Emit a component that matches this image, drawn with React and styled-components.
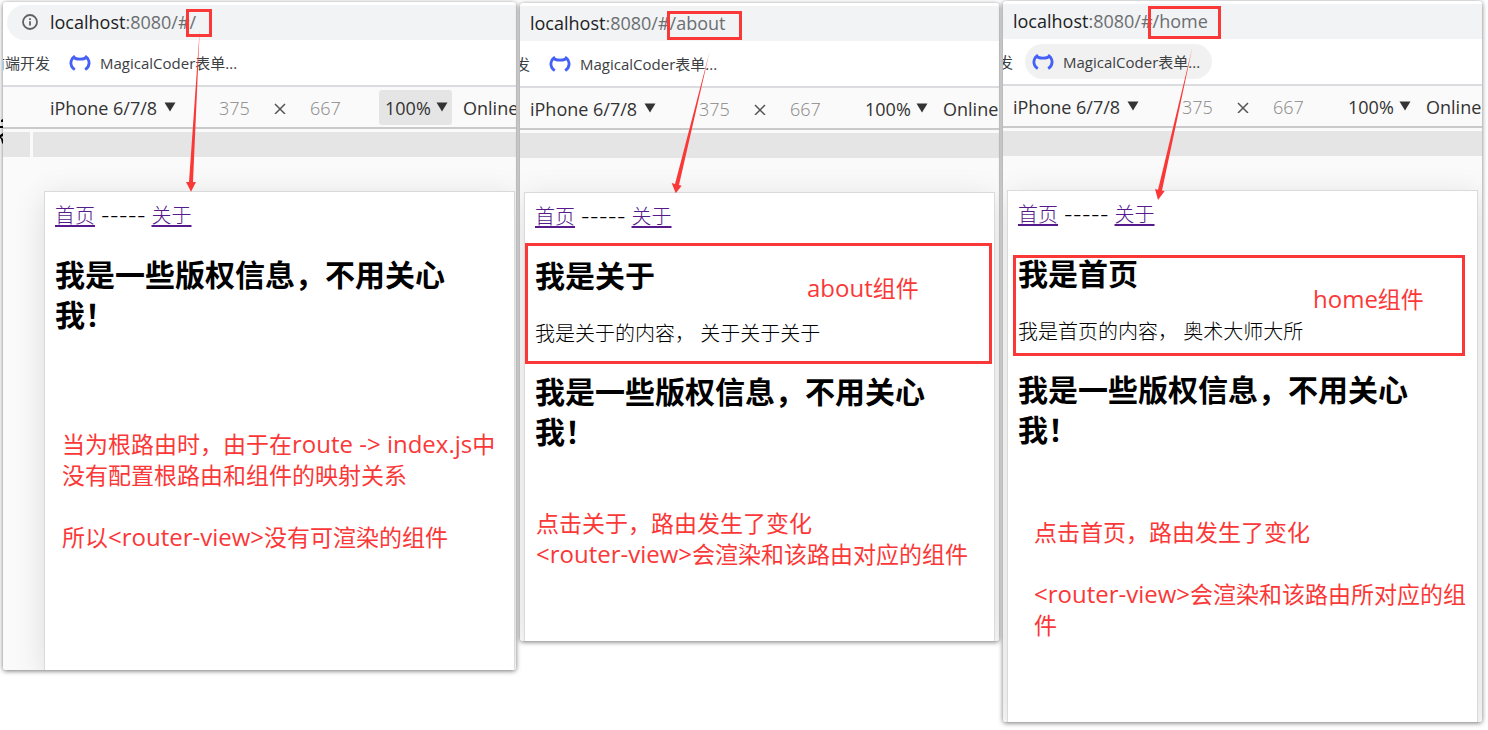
import React from "react";
import styled, { createGlobalStyle } from "styled-components";

const RED = "#fb3838";
const LATIN = '"Open Sans", "Noto Sans CJK SC", sans-serif';

const GlobalStyle = createGlobalStyle`
  * { box-sizing: border-box; }
  body {
    margin: 0;
    background: #fff;
    font-family: ${LATIN};
    overflow-x: hidden;
  }
`;

const Board = styled.main`
  position: relative;
  display: grid;
  grid-template-columns: 513fr 479fr 479fr;
  gap: 4px;
  align-items: start;
  padding: 0 6px 8px 3px;
`;

const EdgeMarks = styled.svg`
  position: absolute;
  left: 0;
  top: 118px;
`;

const Panel = styled.section`
  position: relative;
  min-width: 0;
  margin-top: ${(p) => p.$top}px;
`;

const Clip = styled.div`
  display: flex;
  min-height: ${(p) => p.$height}px;
  overflow: hidden;
  border-radius: 3px;
  background: #fff;
  box-shadow: 0 1px 5px rgba(0, 0, 0, 0.55);
`;

/* The browser content, scrolled sideways when its left part is cut off. */
const Browser = styled.div`
  flex: 1;
  min-width: 0;
  display: flex;
  flex-direction: column;
  margin-left: ${(p) => (p.$scrolled ? -37 : 0)}px;
  padding-top: 3px;
`;

const AddressBar = styled.header`
  display: flex;
  align-items: center;
  gap: 12px;
  height: 35px;
  margin-left: 4px;
  padding: 0 0 1px 15px;
  border-radius: 18px 0 0 18px;
  background: #f1f3f4;
  font-size: 18px;
  line-height: 24px;
  white-space: nowrap;
  color: #6b6e72;
`;

const Host = styled.span`
  color: #202124;
`;

const Bookmarks = styled.nav`
  display: flex;
  align-items: center;
  gap: 12px;
  height: 45px;
  font-size: 15px;
  line-height: 20px;
  white-space: nowrap;
`;

const Folder = styled.a`
  display: flex;
  justify-content: flex-end;
  width: 47px;
  overflow: hidden;
  color: #3c4043;
  text-decoration: none;
`;

const Bookmark = styled.a`
  display: flex;
  align-items: center;
  gap: 9px;
  height: 35px;
  padding: 0 12px 0 7px;
  border-radius: 18px;
  background: ${(p) => (p.$hovered ? "#f1f1f1" : "transparent")};
  color: #3c4043;
  text-decoration: none;
`;

const DeviceBar = styled.div`
  display: flex;
  align-items: center;
  height: 44px;
  padding-left: 41px;
  border-top: 2px solid #dadce0;
  border-bottom: 2px solid #cacaca;
  background: #fafafa;
  font-size: 18px;
  color: #333;
  overflow: hidden;
`;

const Picker = styled.label`
  position: relative;
  flex: none;
  display: flex;
  align-items: center;
  width: ${(p) => p.$width}px;
  height: 35px;
  border-radius: 3px;
  background: ${(p) => (p.$active ? "#e5e5e5" : "transparent")};

  & + & {
    margin-left: 5px;
  }

  select {
    width: 100%;
    height: 35px;
    padding: 2px 0 0 6px;
    border: 0;
    outline: 0;
    appearance: none;
    background: transparent;
    font: inherit;
    color: inherit;
  }

  svg {
    position: absolute;
    right: 4px;
    top: 12px;
    pointer-events: none;
  }
`;

const SizeFields = styled.div`
  flex: none;
  display: flex;
  align-items: center;
  gap: 24px;
  margin: 0 38px 0 39px;
`;

const SizeField = styled.input`
  width: 31px;
  padding: 2px 0 0;
  border: 0;
  outline: 0;
  background: transparent;
  font: inherit;
  font-weight: 300;
  color: #888;
`;

const Ruler = styled.div`
  display: flex;
  gap: 3px;
  height: 28px;
  padding-top: 3px;
  background: #fafafa;

  &::before {
    content: "";
    width: 27px;
    background: #e5e5e5;
  }

  &::after {
    content: "";
    flex: 1;
    background: #e5e5e5;
  }
`;

const Stage = styled.div`
  flex: 1;
  display: flex;
  padding: 34px ${(p) => p.$gutter}px 0 41px;
  background: #fafafa;
  overflow: hidden;
`;

const Screen = styled.article`
  flex: 1;
  min-width: 0;
  padding: 10px 0 0 10px;
  border: 1px solid #dadada;
  border-bottom: 0;
  background: #fff;
  box-shadow: 0 6px 30px rgba(0, 0, 0, 0.12);
  color: #000;
`;

const RouteLinks = styled.nav`
  font-family: Inter, "Noto Sans CJK SC", sans-serif;
  font-size: 20px;
  font-weight: 300;
  line-height: 28px;

  a {
    color: #551a8b;
    text-decoration-thickness: 2px;
    text-underline-offset: 2px;
  }
`;

const Title = styled.h2`
  max-width: 420px;
  margin: 25px 0 24px;
  font-size: 30px;
  line-height: 40px;
  font-weight: 700;
`;

const Body = styled.p`
  margin: 24px 0;
  font-size: 20px;
  line-height: 27px;
  font-weight: 300;
`;

const Note = styled.div`
  margin: ${(p) => p.$gap}px 0 0 ${(p) => p.$indent}px;
  font-size: 23px;
  line-height: 31px;
  color: ${RED};
  white-space: nowrap;
`;

const NoteLine = styled.p`
  height: 31px;
  margin: ${(p) => (p.$spaced ? 31 : 0)}px 0 0;
`;

const Code = styled.span`
  font-size: 24px;
  line-height: 24px;
`;

const Outline = styled.div`
  position: absolute;
  left: ${(p) => p.$x}px;
  top: ${(p) => p.$y}px;
  width: ${(p) => p.$w}px;
  height: ${(p) => p.$h}px;
  border: 3px solid ${RED};
  pointer-events: none;
`;

const Caption = styled.span`
  position: absolute;
  left: ${(p) => p.$x}px;
  top: ${(p) => p.$y}px;
  font-size: 23px;
  line-height: 31px;
  color: ${RED};
  white-space: nowrap;
`;

const ArrowLayer = styled.svg`
  position: absolute;
  left: 0;
  top: 0;
  pointer-events: none;
`;

function InfoIcon() {
  return (
    <svg width="16" height="16" viewBox="0 0 16 16" fill="none" stroke="#5f6368" strokeWidth="1.8" aria-hidden="true">
      <circle cx="8" cy="8" r="7" />
      <path d="M8 7.2v4.3M8 4.2v1.8" />
    </svg>
  );
}

function CatIcon() {
  return (
    <svg width="22" height="16" viewBox="0 0 22 16" fill="none" stroke="#4460f5" strokeWidth="2.8" aria-hidden="true">
      <path d="M5.8 14.6C2.8 12.6 1.4 9.2 2.2 6 2.7 4 3.4 2.8 4.8 2 6.2 4.8 15.8 4.8 17.2 2 18.6 2.8 19.3 4 19.8 6 20.6 9.2 19.2 12.6 16.2 14.6" />
    </svg>
  );
}

function Triangle() {
  return (
    <svg width="12" height="10" viewBox="0 0 12 10" aria-hidden="true">
      <path d="M0.5 0.5h11L6 9.5z" fill="#333" />
    </svg>
  );
}

function Cross() {
  return (
    <svg width="12" height="14" viewBox="0 0 12 14" stroke="#555" strokeWidth="1.5" aria-hidden="true">
      <path d="M1 4l10 10M11 4L1 14" />
    </svg>
  );
}

function Shot({ top, height, scrolled, route, gutter, activeZoom, hovered, arrow, marks, children }) {
  return (
    <Panel $top={top}>
      <Clip $height={height}>
        <Browser $scrolled={scrolled}>
          <AddressBar>
            <InfoIcon />
            <span>
              <Host>localhost</Host>:8080/#{route}
            </span>
          </AddressBar>
          <Bookmarks>
            <Folder href="#folder">前端开发</Folder>
            <Bookmark href="#magicalcoder" $hovered={hovered}>
              <CatIcon />
              <span>MagicalCoder表单...</span>
            </Bookmark>
          </Bookmarks>
          <DeviceBar>
            <Picker $width={136}>
              <select aria-label="Device" defaultValue="iPhone 6/7/8">
                <option>iPhone 6/7/8</option>
              </select>
              <Triangle />
            </Picker>
            <SizeFields>
              <SizeField aria-label="Width" defaultValue="375" />
              <Cross />
              <SizeField aria-label="Height" defaultValue="667" />
            </SizeFields>
            <Picker $width={73} $active={activeZoom}>
              <select aria-label="Zoom" defaultValue="100%">
                <option>100%</option>
              </select>
              <Triangle />
            </Picker>
            <Picker $width={82}>
              <select aria-label="Throttling" defaultValue="Online">
                <option>Online</option>
              </select>
              <Triangle />
            </Picker>
          </DeviceBar>
          <Ruler />
          <Stage $gutter={gutter}>
            <Screen>
              <RouteLinks>
                <a href="#/home">首页</a> ----- <a href="#/about">关于</a>
              </RouteLinks>
              {children}
            </Screen>
          </Stage>
        </Browser>
      </Clip>
      {marks}
      <ArrowLayer width="240" height="220" viewBox="0 0 240 220" fill={RED} aria-hidden="true">
        <path d={arrow} />
      </ArrowLayer>
    </Panel>
  );
}

function Copyright() {
  return <Title>我是一些版权信息，不用关心我！</Title>;
}

export default function App() {
  return (
    <>
      <GlobalStyle />
      <Board lang="zh-CN">
        <EdgeMarks width="3" height="30" viewBox="0 0 3 30" fill="#000" aria-hidden="true">
          <path d="M1 2l2-1v3H1zM0 8h3v2H0zM0 17l3-2v3l-2 1 2 2v5l-1-1-1-4-1-1z" />
        </EdgeMarks>
        <Shot
          top={2}
          height={668}
          gutter={1}
          route="/"
          activeZoom
          arrow="M196.7 28L190 180H193L188 189.7 183 180H186z"
          marks={<Outline $x={183} $y={7} $w={26} $h={28} />}
        >
          <Copyright />
          <Note $gap={94} $indent={7}>
            <NoteLine>
              当为根路由时，由于在<Code>{"route -> index.js"}</Code>中
            </NoteLine>
            <NoteLine>没有配置根路由和组件的映射关系</NoteLine>
            <NoteLine $spaced>
              所以<Code>{"<router-view>"}</Code>没有可渲染的组件
            </NoteLine>
          </Note>
        </Shot>
        <Shot
          top={3}
          height={638}
          scrolled
          gutter={4}
          route="/about"
          arrow="M189.5 49L159 182 161.7 182.7 155.7 190.3 151.7 180 155 181z"
          marks={
            <>
              <Outline $x={147} $y={8} $w={75} $h={29} />
              <Outline $x={5} $y={240} $w={467} $h={121} />
              <Caption $x={287} $y={270}>
                <Code>about</Code>组件
              </Caption>
            </>
          }
        >
          <Title>我是关于</Title>
          <Body>我是关于的内容， 关于关于关于</Body>
          <Copyright />
          <Note $gap={56} $indent={1}>
            <NoteLine>点击关于，路由发生了变化</NoteLine>
            <NoteLine>
              <Code>{"<router-view>"}</Code>会渲染和该路由对应的组件
            </NoteLine>
          </Note>
        </Shot>
        <Shot
          top={1}
          height={721}
          scrolled
          gutter={4}
          route="/home"
          hovered
          arrow="M189.3 46.7L159 189.5 161.7 190 155 199 152 188 155 188.7z"
          marks={
            <>
              <Outline $x={145} $y={5} $w={73} $h={33} />
              <Outline $x={10} $y={254} $w={452} $h={101} />
              <Caption $x={310} $y={283}>
                <Code>home</Code>组件
              </Caption>
            </>
          }
        >
          <Title>我是首页</Title>
          <Body>我是首页的内容， 奥术大师大所</Body>
          <Copyright />
          <Note $gap={67} $indent={16}>
            <NoteLine>点击首页，路由发生了变化</NoteLine>
            <NoteLine $spaced>
              <Code>{"<router-view>"}</Code>会渲染和该路由所对应的组
            </NoteLine>
            <NoteLine>件</NoteLine>
          </Note>
        </Shot>
      </Board>
    </>
  );
}
